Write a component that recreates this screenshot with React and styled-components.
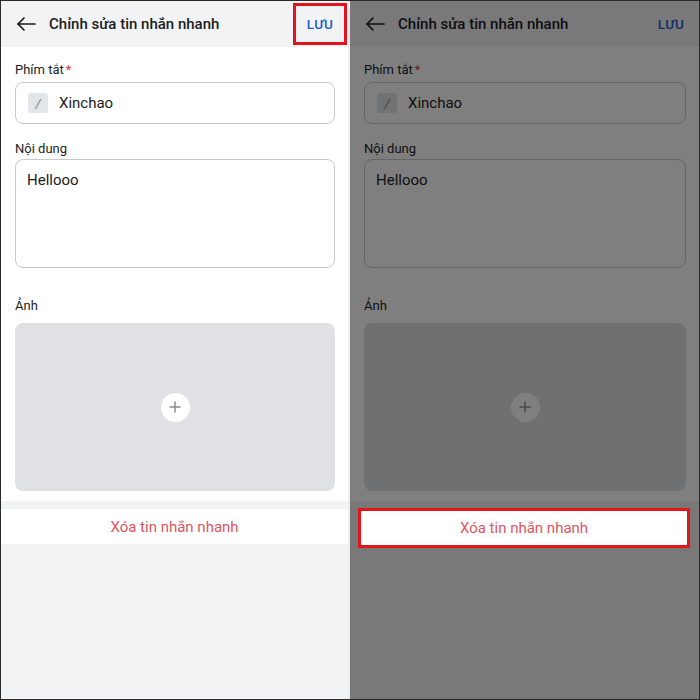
import React from 'react';
import styled, {createGlobalStyle} from "styled-components";

const GlobalStyle = createGlobalStyle`
      html, body {
            margin: 0;
            padding: 0;
            background: #ffffff;
      }
      * {
            box-sizing: border-box;
      }
`;

const Frame = styled.div`
      display: grid;
      grid-template-columns: 347px 2px 349px;
      width: 700px;
      height: 700px;
      border: 1px solid #2a2a2a;
      overflow: hidden;
      font-family: Roboto, "Noto Sans", "Liberation Sans", sans-serif;
      color: #1c1c1e;
`;

const Divider = styled.div`
      background: #eceef0;
`;

const Panel = styled.div`
      position: relative;
      display: flex;
      flex-direction: column;
      height: 100%;
      background: #f2f3f5;

      &::after {
            content: "";
            display: ${({dimmed}) => dimmed ? 'block' : 'none'};
            position: absolute;
            inset: 0;
            background: rgba(0, 0, 0, 0.5);
            z-index: 1;
      }
`;

const Header = styled.header`
      display: flex;
      align-items: center;
      height: 46px;
      padding-left: 15px;
      background: #f2f3f5;
`;

const BackButton = styled.span`
      display: flex;
      align-items: center;
      width: 20px;
      height: 20px;
      margin-right: 13px;
`;

const Title = styled.h1`
      flex: 1;
      margin: 0;
      font-size: 15px;
      font-weight: 500;
      color: #1c1c1e;
`;

const SaveButton = styled.span`
      display: flex;
      align-items: center;
      justify-content: center;
      width: 54px;
      height: 42px;
      margin-right: 1px;
      border: 3px solid ${({boxed}) => boxed ? '#e3141c' : 'transparent'};
      font-size: 13.5px;
      font-weight: 500;
      color: #1d5fc9;
      letter-spacing: 0.3px;
`;

const Body = styled.div`
      display: flex;
      flex-direction: column;
      padding: 14px 13px 10px 14px;
      background: #ffffff;
`;

const Label = styled.div`
      height: 18px;
      margin-top: ${({gap}) => gap || 0}px;
      margin-bottom: ${({below}) => below || 3}px;
      font-size: 13px;
      line-height: 18px;
      color: #1c1c1e;
`;

const Required = styled.span`
      margin-left: 2px;
      color: #e0323c;
`;

const InputBox = styled.div`
      display: flex;
      align-items: center;
      gap: 11px;
      height: 42px;
      padding: 0 12px;
      border: 1px solid #c9cacc;
      border-radius: 8px;
      font-size: 15px;
`;

const SlashBadge = styled.span`
      display: flex;
      align-items: center;
      justify-content: center;
      width: 20px;
      height: 20px;
      border-radius: 3px;
      background: #e3e5e8;
      color: #7d8085;
      font-size: 13px;
      font-style: italic;
`;

const TextArea = styled.div`
      height: 109px;
      padding: 10px 11px;
      border: 1px solid #c9cacc;
      border-radius: 8px;
      font-size: 15px;
      line-height: 20px;
`;

const ImageDrop = styled.div`
      display: flex;
      align-items: center;
      justify-content: center;
      height: 168px;
      border-radius: 8px;
      background: #dfe1e4;
`;

const AddCircle = styled.span`
      display: flex;
      align-items: center;
      justify-content: center;
      width: 29px;
      height: 29px;
      border-radius: 50%;
      background: #ffffff;
`;

const Band = styled.div`
      height: 8px;
      background: #f2f3f5;
`;

const DeleteButton = styled.div`
      position: relative;
      z-index: ${({highlight}) => highlight ? 2 : 0};
      display: flex;
      align-items: center;
      justify-content: center;
      height: ${({highlight}) => highlight ? 40 : 35}px;
      margin: ${({highlight}) => highlight ? '-1px 9px 0 8px' : '0'};
      border: ${({highlight}) => highlight ? '3px solid #e3141c' : 'none'};
      background: #ffffff;
      font-size: 15px;
      color: #e05560;
`;

const BackArrow = () => (
    <svg width="20" height="20" viewBox="0 0 20 20" fill="none" stroke="#1c1c1e" strokeWidth="1.7" strokeLinecap="round" strokeLinejoin="round">
        <path d="M2 10h17"/>
        <path d="M8 4l-6 6 6 6"/>
    </svg>
);

const PlusIcon = () => (
    <svg width="12" height="12" viewBox="0 0 12 12" stroke="#8c8f93" strokeWidth="1.5" strokeLinecap="round">
        <path d="M6 1v10M1 6h10"/>
    </svg>
);

const QuickReplyEditor = ({dimmed, boxedSave, highlightDelete}) => (
    <Panel dimmed={dimmed}>
        <Header>
            <BackButton><BackArrow/></BackButton>
            <Title>Chỉnh sửa tin nhắn nhanh</Title>
            <SaveButton boxed={boxedSave}>LƯU</SaveButton>
        </Header>
        <Body>
            <Label>Phím tắt<Required>*</Required></Label>
            <InputBox>
                <SlashBadge>/</SlashBadge>
                Xinchao
            </InputBox>
            <Label gap={16} below={1}>Nội dung</Label>
            <TextArea>Hellooo</TextArea>
            <Label gap={29} below={8}>Ảnh</Label>
            <ImageDrop>
                <AddCircle><PlusIcon/></AddCircle>
            </ImageDrop>
        </Body>
        <Band/>
        <DeleteButton highlight={highlightDelete}>Xóa tin nhắn nhanh</DeleteButton>
    </Panel>
);

const App = () => (
    <>
        <GlobalStyle/>
        <Frame>
            <QuickReplyEditor boxedSave/>
            <Divider/>
            <QuickReplyEditor dimmed highlightDelete/>
        </Frame>
    </>
);

export default App;
